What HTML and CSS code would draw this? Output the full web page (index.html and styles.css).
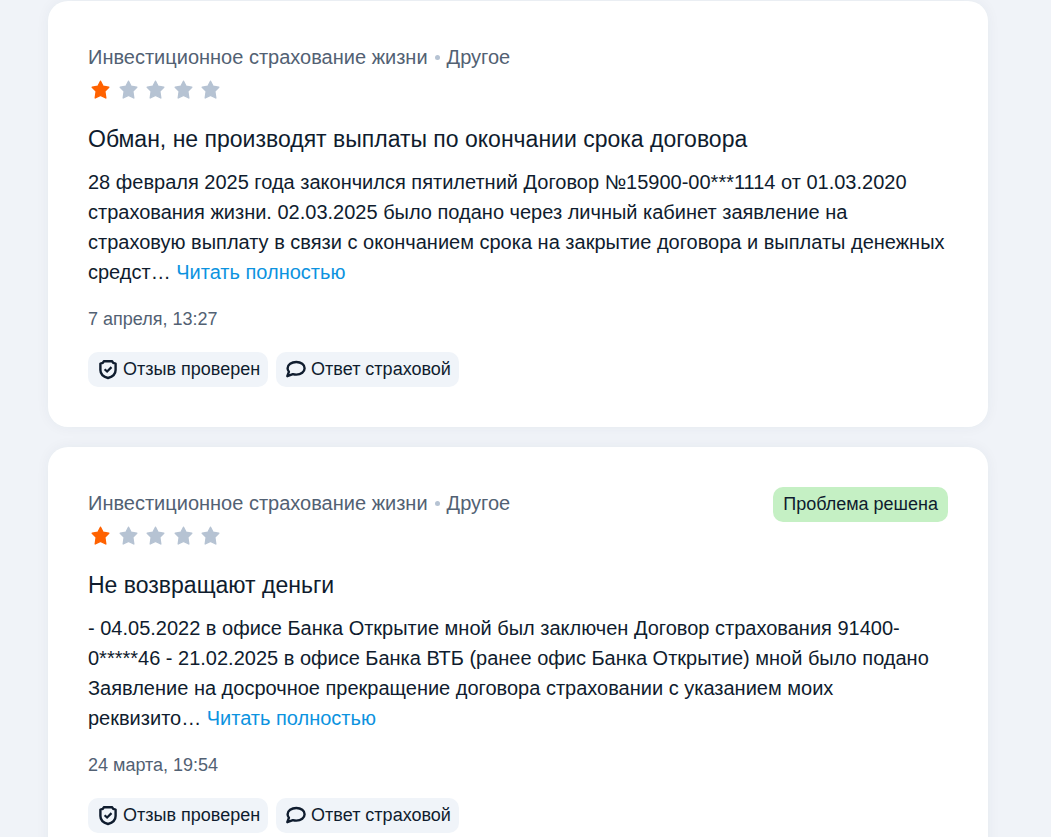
FILE: index.html
```html
<!DOCTYPE html>
<html lang="ru">
<head>
<meta charset="utf-8">
<title>Отзывы</title>
<link rel="stylesheet" href="styles.css">
</head>
<body>
<svg class="sprite" aria-hidden="true">
  <symbol id="star" viewBox="0 0 20 20"><path d="M9.500 1.200l2.600 5.100 5.700.9-4 4 1 6.800-5.300-2.700-5.300 2.700 1-6.800-4-4 5.700-.9z" fill="currentColor" stroke="currentColor" stroke-width="1.400" stroke-linejoin="round"/></symbol>
  <symbol id="shield" viewBox="0 0 20 20"><path d="M5.800 1.300H14.200L15.200 2.900L17.600 3.600V10C17.600 14 14.500 16.800 10 18C5.500 16.800 2.400 14 2.400 10V3.600L4.800 2.900z" fill="none" stroke="currentColor" stroke-width="2.400" stroke-linejoin="round"/><path d="M6.600 9.200l2.500 2.300 4.400-4.400" fill="none" stroke="currentColor" stroke-width="2.200"/></symbol>
  <symbol id="bubble" viewBox="0 0 20 20"><path d="M10.300 2c4.800 0 8.300 2.700 8.300 6.300s-3.500 6.300-8.300 6.300c-1.200 0-2.400-.2-3.400-.5L1.300 16.200l1.600-4.400C2.100 10.800 1.600 9.600 1.600 8.300c0-3.600 3.900-6.300 8.700-6.300z" fill="none" stroke="currentColor" stroke-width="2.400" stroke-linejoin="round"/></symbol>
</svg>
<main class="reviews">
  <article class="card">
    <header class="card-head">
      <p class="category">Инвестиционное страхование жизни<span class="dot"></span>Другое</p>
    </header>
    <div class="stars" role="img" aria-label="Оценка 1 из 5">
      <svg class="star star-on"><use href="#star"/></svg><svg class="star"><use href="#star"/></svg><svg class="star"><use href="#star"/></svg><svg class="star"><use href="#star"/></svg><svg class="star"><use href="#star"/></svg>
    </div>
    <h2 class="title">Обман, не производят выплаты по окончании срока договора</h2>
    <p class="text">28 февраля 2025 года закончился пятилетний Договор №15900-00***1114 от 01.03.2020 страхования жизни. 02.03.2025 было подано через личный кабинет заявление на страховую выплату в связи с окончанием срока на закрытие договора и выплаты денежных средст… <a class="more" href="#">Читать полностью</a></p>
    <time class="date">7 апреля, 13:27</time>
    <div class="tags">
      <span class="tag"><svg class="icon"><use href="#shield"/></svg>Отзыв проверен</span>
      <span class="tag"><svg class="icon"><use href="#bubble"/></svg>Ответ страховой</span>
    </div>
  </article>
  <article class="card">
    <header class="card-head">
      <p class="category">Инвестиционное страхование жизни<span class="dot"></span>Другое</p>
      <span class="status">Проблема решена</span>
    </header>
    <div class="stars" role="img" aria-label="Оценка 1 из 5">
      <svg class="star star-on"><use href="#star"/></svg><svg class="star"><use href="#star"/></svg><svg class="star"><use href="#star"/></svg><svg class="star"><use href="#star"/></svg><svg class="star"><use href="#star"/></svg>
    </div>
    <h2 class="title">Не возвращают деньги</h2>
    <p class="text">- 04.05.2022 в офисе Банка Открытие мной был заключен Договор страхования 91400-0*****46 - 21.02.2025 в офисе Банка ВТБ (ранее офис Банка Открытие) мной было подано Заявление на досрочное прекращение договора страховании с указанием моих реквизито… <a class="more" href="#">Читать полностью</a></p>
    <time class="date">24 марта, 19:54</time>
    <div class="tags">
      <span class="tag"><svg class="icon"><use href="#shield"/></svg>Отзыв проверен</span>
      <span class="tag"><svg class="icon"><use href="#bubble"/></svg>Ответ страховой</span>
    </div>
  </article>
</main>
</body>
</html>
```

FILE: styles.css
```css
* { box-sizing: border-box; }
html { scrollbar-width: none; }
body {
  margin: 0;
  background: #f0f3f8;
  color: #0f1c2e;
  font-family: "Liberation Sans", Arial, sans-serif;
}
.sprite { display: none; }
.reviews {
  display: flex;
  flex-direction: column;
  gap: 20px;
  padding: 1px 63px 20px 48px;
}
.card {
  background: #fff;
  border-radius: 20px;
  padding: 40px;
  box-shadow: 0 0 14px rgba(30, 60, 80, 0.05);
}
.card-head {
  display: flex;
  justify-content: space-between;
  align-items: flex-start;
  height: 32px;
}
.category {
  display: flex;
  align-items: center;
  margin: 0;
  color: #526173;
  font-size: 20px;
  line-height: 32px;
}
.dot {
  width: 5px;
  height: 5px;
  margin: 0 7px;
  border-radius: 50%;
  background: #b6c3d3;
}
.status {
  padding: 0 10px;
  border-radius: 10px;
  background: #c5f0c4;
  font-size: 18px;
  line-height: 35px;
}
.stars {
  display: flex;
  justify-content: space-between;
  width: 136px;
  padding: 7px 3px;
}
.star { width: 20px; height: 20px; color: #b6c3d3; }
.star-on { color: #ff6200; }
.title {
  margin: 16px 0 12px;
  font-size: 23px;
  line-height: 32px;
  font-weight: 400;
}
.text { margin: 0; font-size: 20px; line-height: 30px; }
.more { color: #0c93df; text-decoration: none; }
.date {
  display: block;
  margin: 19px 0 20px;
  color: #526173;
  font-size: 18px;
  line-height: 26px;
}
.tags { display: flex; flex-wrap: wrap; gap: 8px; }
.tag {
  display: flex;
  align-items: center;
  gap: 5px;
  padding: 0 8px 0 10px;
  border-radius: 10px;
  background: #f0f4f9;
  font-size: 18px;
  line-height: 35px;
}
.icon { width: 20px; height: 20px; }
```
